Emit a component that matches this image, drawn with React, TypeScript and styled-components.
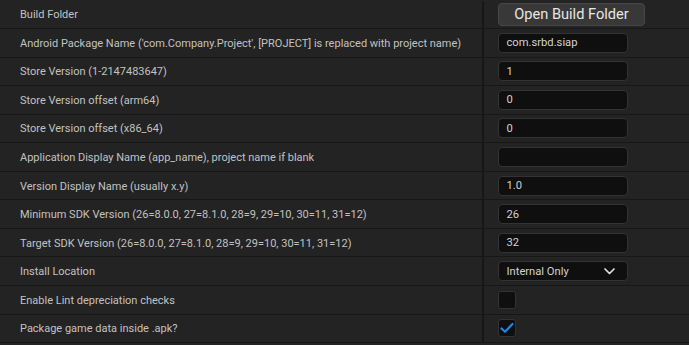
import React from "react";
import styled, { createGlobalStyle } from "styled-components";

const Global = createGlobalStyle`
  html, body { margin: 0; padding: 0; background: #232323; }
  body { font-family: Roboto, "Noto Sans", sans-serif; }
`;

const Panel = styled.div`
  width: 689px;
  height: 345px;
  overflow: hidden;
  background: #232323;
  display: flex;
  flex-direction: column;
  padding-top: 0.5px;
  box-sizing: border-box;
`;

const Row = styled.div`
  box-sizing: border-box;
  flex: 0 0 28.55px;
  display: grid;
  grid-template-columns: 482px 1.5px 1fr;
  border-bottom: 1.5px solid #171717;
`;

const Label = styled.div`
  display: flex;
  align-items: center;
  padding-left: 20px;
  padding-top: 1px;
  color: #c2c2c2;
  font-size: 11px;
  white-space: nowrap;
`;

const Divider = styled.div`
  background: #171717;
`;

const Value = styled.div`
  display: flex;
  align-items: center;
  padding-left: 14.5px;
`;

const Button = styled.div`
  box-sizing: border-box;
  width: 147px;
  height: 23px;
  background: #383838;
  border: 1px solid #474747;
  border-radius: 4px;
  color: #e6e6e6;
  font-size: 14.6px;
  display: flex;
  align-items: center;
  justify-content: center;
`;

const Field = styled.div`
  box-sizing: border-box;
  width: 130px;
  height: 20px;
  background: #0f0f0f;
  border: 1px solid #333333;
  border-radius: 4px;
  color: #d2d2d2;
  font-size: 11.2px;
  padding-left: 7.5px;
  padding-right: 12px;
  display: flex;
  align-items: center;
  justify-content: space-between;
`;

const Check = styled.div`
  box-sizing: border-box;
  width: 18px;
  height: 18px;
  background: #0f0f0f;
  border: 1px solid #333333;
  border-radius: 3px;
  display: flex;
  align-items: center;
  justify-content: center;
`;

type Item =
  | { label: string; kind: "button"; value: string }
  | { label: string; kind: "field"; value: string }
  | { label: string; kind: "select"; value: string }
  | { label: string; kind: "check"; checked: boolean };

const items: Item[] = [
  { label: "Build Folder", kind: "button", value: "Open Build Folder" },
  {
    label:
      "Android Package Name ('com.Company.Project', [PROJECT] is replaced with project name)",
    kind: "field",
    value: "com.srbd.siap",
  },
  { label: "Store Version (1-2147483647)", kind: "field", value: "1" },
  { label: "Store Version offset (arm64)", kind: "field", value: "0" },
  { label: "Store Version offset (x86_64)", kind: "field", value: "0" },
  {
    label: "Application Display Name (app_name), project name if blank",
    kind: "field",
    value: "",
  },
  { label: "Version Display Name (usually x.y)", kind: "field", value: "1.0" },
  {
    label: "Minimum SDK Version (26=8.0.0, 27=8.1.0, 28=9, 29=10, 30=11, 31=12)",
    kind: "field",
    value: "26",
  },
  {
    label: "Target SDK Version (26=8.0.0, 27=8.1.0, 28=9, 29=10, 30=11, 31=12)",
    kind: "field",
    value: "32",
  },
  { label: "Install Location", kind: "select", value: "Internal Only" },
  { label: "Enable Lint depreciation checks", kind: "check", checked: false },
  { label: "Package game data inside .apk?", kind: "check", checked: true },
];

const Chevron = () => (
  <svg width="11" height="7" viewBox="0 0 11 7">
    <polyline
      points="1,1 5.5,5.5 10,1"
      fill="none"
      stroke="#e0e0e0"
      strokeWidth="1.7"
      strokeLinecap="round"
      strokeLinejoin="round"
    />
  </svg>
);

const Tick = () => (
  <svg width="14" height="12" viewBox="0 0 14 12">
    <polyline
      points="1.5,6.5 5,9.8 12.5,2"
      fill="none"
      stroke="#1f87ea"
      strokeWidth="2.2"
      strokeLinecap="round"
      strokeLinejoin="round"
    />
  </svg>
);

function renderValue(it: Item) {
  switch (it.kind) {
    case "button":
      return <Button>{it.value}</Button>;
    case "field":
      return <Field>{it.value}</Field>;
    case "select":
      return (
        <Field>
          <span>{it.value}</span>
          <Chevron />
        </Field>
      );
    case "check":
      return <Check>{it.checked ? <Tick /> : null}</Check>;
  }
}

export default function App() {
  return (
    <>
      <Global />
      <Panel>
        {items.map((it) => (
          <Row key={it.label}>
            <Label>{it.label}</Label>
            <Divider />
            <Value>{renderValue(it)}</Value>
          </Row>
        ))}
      </Panel>
    </>
  );
}
